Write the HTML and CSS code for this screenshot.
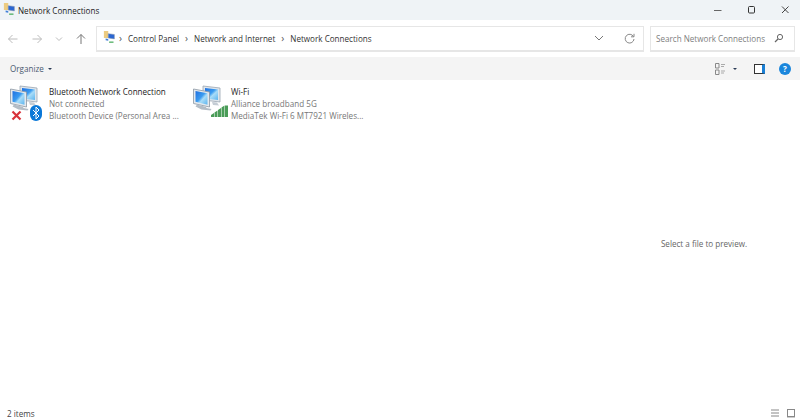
FILE: index.html
```html
<!DOCTYPE html>
<html lang="en">
<head>
  <meta charset="UTF-8" />
  <title>Network Connections</title>
  <link rel="stylesheet" href="styles.css">
</head>
<body>
  <svg class="defs" width="0" height="0">
    <defs>
      <linearGradient id="screen" x1="0" y1="0" x2="1" y2="1">
        <stop offset="0" stop-color="#1f6fe0"/>
        <stop offset="0.45" stop-color="#3a9bf0"/>
        <stop offset="0.6" stop-color="#a8dcf8"/>
        <stop offset="1" stop-color="#5cb4ee"/>
      </linearGradient>
      <symbol id="computers" viewBox="0 0 30 26">
        <path d="M10 1l17 2v14l-17-2z" fill="#dfe6ec" stroke="#9aa6b2" stroke-width=".8"/>
        <path d="M12 3l13 1.500v10.500l-13-1.500z" fill="url(#screen)"/>
        <path d="M19 17l5 .5 2 3-6-.5z" fill="#c4ccd4"/>
        <path d="M.5 4l16 3v15L.5 18.500z" fill="#e4e9ee" stroke="#8b97a3" stroke-width=".8"/>
        <path d="M2.500 6l12 2.300v11.500l-12-3z" fill="url(#screen)"/>
        <path d="M4 19.500l9 2.500 .5 1 5 1-1 1.500-9-1-6-3z" fill="#b4bdc6"/>
      </symbol>
      <symbol id="netsmall" viewBox="0 0 16 16">
        <path d="M1 0h5v8H1z" fill="#eccb80"/>
        <path d="M6 3l7 1v5l-7-1z" fill="#2a66d2" stroke="#8a98a8" stroke-width=".6"/>
        <path d="M3 8.500l3 .5v2l-3-.5z" fill="#4080d8"/>
        <path d="M7 12h5v1.500H7z" fill="#4fae62"/>
      </symbol>
    </defs>
  </svg>

  <div class="window">
    <div class="titlebar">
      <svg class="app-icon" width="14" height="14"><use href="#netsmall"/></svg>
      <span class="title">Network Connections</span>
      <div class="win-buttons">
        <svg width="12" height="12" viewBox="0 0 12 12"><path d="M3 6.500h7.500" stroke="#666" fill="none"/></svg>
        <svg width="12" height="12" viewBox="0 0 12 12"><rect x="3.500" y="2.500" width="6" height="6.500" rx="1" stroke="#333" fill="none"/></svg>
        <svg width="12" height="12" viewBox="0 0 12 12"><path d="M3 2.500l6.500 6.500M9.500 2.500L3 9" stroke="#444" fill="none"/></svg>
      </div>
    </div>

    <div class="navbar">
      <div class="nav-buttons">
        <svg width="12" height="12" viewBox="0 0 12 12"><path d="M10.500 6H1.500M5.500 2L1.500 6l4 4" stroke="#bcbcbc" fill="none"/></svg>
        <svg width="12" height="12" viewBox="0 0 12 12"><path d="M1.500 6h9M6.500 2l4 4-4 4" stroke="#bcbcbc" fill="none"/></svg>
        <svg width="8" height="12" viewBox="0 0 8 12"><path d="M1 4.500L4 7.500l3-3" stroke="#bcbcbc" fill="none"/></svg>
        <svg width="12" height="12" viewBox="0 0 12 12"><path d="M6 11V1.500M2 5.500l4-4 4 4" stroke="#777" fill="none"/></svg>
      </div>
      <div class="address">
        <svg class="app-icon" width="14" height="14"><use href="#netsmall"/></svg>
        <span class="sep sep-first">›</span><span>Control Panel</span>
        <span class="sep">›</span><span>Network and Internet</span>
        <span class="sep">›</span><span>Network Connections</span>
        <div class="address-tools">
          <svg width="10" height="10" viewBox="0 0 10 10"><path d="M1 3l4 4 4-4" stroke="#777" fill="none"/></svg>
          <svg width="11" height="11" viewBox="0 0 11 11"><path d="M9.500 3.600A4.400 4.400 0 1 0 10 6M10 .8v3H7" stroke="#888" fill="none"/></svg>
        </div>
      </div>
      <div class="search">
        <span>Search Network Connections</span>
        <svg width="10" height="10" viewBox="0 0 10 10"><circle cx="6" cy="4" r="2.600" stroke="#666" fill="none"/><path d="M4 6L1 9" stroke="#666" stroke-width="1.200"/></svg>
      </div>
    </div>

    <div class="toolbar">
      <span class="organize">Organize</span>
      <span class="caret"></span>
      <div class="view-tools">
        <svg width="11" height="12" viewBox="0 0 11 12"><path d="M.5 .5h3.500v4.500H.5zM.5 7h3.500v4.500H.5z" stroke="#888" fill="none"/><path d="M6 1.500h4M6 3.500h3M6 8h4M6 10h3" stroke="#aaa"/></svg>
        <span class="caret"></span>
        <span class="pane-icon"></span>
        <span class="help">?</span>
      </div>
    </div>

    <div class="body">
      <div class="files">
        <div class="item">
          <div class="item-icon">
            <svg class="pc" width="30" height="26"><use href="#computers"/></svg>
            <svg class="status-x" width="11" height="11" viewBox="0 0 11 11"><path d="M1.500 1.500l8 8M9.500 1.500l-8 8" stroke="#d8323a" stroke-width="2.200"/></svg>
            <svg class="status-bt" width="12" height="16" viewBox="0 0 12 16"><rect width="12" height="16" rx="6" fill="#0a78d8"/><path d="M3 5l6 6-3 3V2l3 3-6 6" stroke="#fff" fill="none"/></svg>
          </div>
          <div class="item-text">
            <div class="item-name">Bluetooth Network Connection</div>
            <div>Not connected</div>
            <div>Bluetooth Device (Personal Area ...</div>
          </div>
        </div>
        <div class="item">
          <div class="item-icon">
            <svg class="pc" width="30" height="26"><use href="#computers"/></svg>
            <svg class="status-wifi" width="17" height="12" viewBox="0 0 17 12"><path d="M0 12V10l3-2v4zM3.500 12V7.500l3-2V12zM7 12V5l3-2v9zM10.500 12V2.500l3-2V12zM14 12V.5h3V12z" fill="#4a9c58"/></svg>
          </div>
          <div class="item-text">
            <div class="item-name">Wi-Fi</div>
            <div>Alliance broadband 5G</div>
            <div>MediaTek Wi-Fi 6 MT7921 Wireles...</div>
          </div>
        </div>
      </div>
      <div class="preview">Select a file to preview.</div>
    </div>

    <div class="statusbar">
      <span>2 items</span>
      <div class="status-views">
        <svg width="8" height="8" viewBox="0 0 8 8"><path d="M0 1h8M0 4h8M0 7h8" stroke="#888"/></svg>
        <svg width="8" height="9" viewBox="0 0 8 9"><rect x=".5" y=".5" width="7" height="7" stroke="#888" fill="none"/><path d="M0 8.500h8" stroke="#ccc"/></svg>
      </div>
    </div>
  </div>
</body>
</html>
```

FILE: styles.css
```css
body {
  font-family: "Open Sans", "Noto Sans", sans-serif;
  font-size: 8.1px;
  color: #333;
  background: white;
  margin: 0;
}
.defs {
  display: block;
  height: 0;
}
.window {
  height: 418px;
  display: flex;
  flex-direction: column;
  overflow: hidden;
}
.titlebar {
  height: 20px;
  flex: none;
  display: flex;
  align-items: center;
  padding-left: 3px;
  background: #eff3f6;
}
.title {
  margin-left: 1px;
  color: #222;
}
.win-buttons {
  margin-left: auto;
  margin-right: 9px;
  display: flex;
  gap: 22px;
}
.navbar {
  height: 37px;
  flex: none;
  display: flex;
  align-items: center;
  background: white;
}
.nav-buttons {
  width: 96px;
  flex: none;
  display: flex;
  align-items: center;
  padding-left: 7px;
  gap: 12px;
  box-sizing: border-box;
}
.address {
  width: 548px;
  height: 26px;
  flex: none;
  display: flex;
  align-items: center;
  box-sizing: border-box;
  padding-left: 6px;
  border: 1px solid #e6e6e6;
  border-bottom-width: 2px;
}
.sep {
  margin: 0 6px;
  color: #555;
  font-size: 10px;
}
.sep-first {
  margin-left: 2px;
}
.address-tools {
  margin-left: auto;
  margin-right: 8px;
  display: flex;
  align-items: center;
  gap: 20px;
}
.search {
  width: 145px;
  height: 26px;
  flex: none;
  margin-left: 6px;
  display: flex;
  align-items: center;
  justify-content: space-between;
  box-sizing: border-box;
  padding: 0 10px 0 5px;
  border: 1px solid #e6e6e6;
  border-bottom-width: 2px;
  color: #808080;
}
.toolbar {
  height: 23px;
  flex: none;
  display: flex;
  align-items: center;
  padding-left: 10px;
  background: #f4f4f4;
}
.organize {
  color: #4a5a70;
}
.caret {
  width: 0;
  height: 0;
  margin-left: 4px;
  border-left: 2.500px solid transparent;
  border-right: 2.500px solid transparent;
  border-top: 2.500px solid #2a3a55;
}
.view-tools {
  margin-left: auto;
  margin-right: 9px;
  display: flex;
  align-items: center;
}
.view-tools .caret {
  margin-left: 7px;
  margin-right: 17px;
}
.pane-icon {
  width: 7px;
  height: 8px;
  border: 1px solid #333;
  border-right: 3px solid #1a7fd4;
  background: white;
  margin-right: 14px;
}
.help {
  width: 12px;
  height: 12px;
  border-radius: 50%;
  background: #1a86dc;
  color: white;
  font-weight: bold;
  font-size: 8px;
  line-height: 12px;
  text-align: center;
}
.body {
  flex: 1;
  display: flex;
  min-height: 0;
}
.files {
  flex: 1;
  display: flex;
  align-items: flex-start;
  padding: 5px 0 0 10px;
}
.item {
  width: 183px;
  display: flex;
}
.item-icon {
  position: relative;
  width: 39px;
  height: 36px;
  flex: none;
}
.item:last-child .item-icon {
  width: 38px;
}
.pc {
  display: block;
}
.status-x {
  position: absolute;
  left: 1px;
  top: 25px;
}
.status-bt {
  position: absolute;
  left: 20px;
  top: 20px;
}
.status-wifi {
  position: absolute;
  left: 18px;
  top: 20px;
}
.item-text {
  padding-top: 1px;
  line-height: 12px;
  color: #777;
  white-space: nowrap;
}
.item-name {
  color: #222;
}
.preview {
  width: 192px;
  flex: none;
  display: flex;
  align-items: center;
  justify-content: center;
  color: #666;
}
.statusbar {
  height: 12px;
  flex: none;
  display: flex;
  align-items: center;
  justify-content: space-between;
  padding: 2px 5px 0 7px;
  box-sizing: border-box;
  color: #444;
}
.status-views {
  display: flex;
  align-items: center;
  gap: 8px;
}
```
